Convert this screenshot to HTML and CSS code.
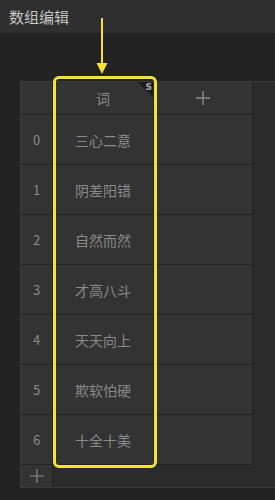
FILE: index.html
```html
<!DOCTYPE html>
<html lang="zh">
<head>
    <meta charset="UTF-8">
    <title>数组编辑</title>
    <link rel="stylesheet" href="styles.css">
</head>
<body>

    <div class="titlebar">数组编辑</div>

    <div class="stage">
        <div class="panel">
            <div class="grid">
                <div class="cell idx head"></div>
                <div class="cell word head">词<span class="badge">S</span></div>
                <div class="cell add head">
                    <svg width="16" height="16" viewBox="0 0 16 16"><path d="M8 1v14M1 8h14" stroke="#8a8a8a" stroke-width="1.4"/></svg>
                </div>

                <div class="cell idx">0</div><div class="cell word">三心二意</div><div class="cell empty"></div>
                <div class="cell idx">1</div><div class="cell word">阴差阳错</div><div class="cell empty"></div>
                <div class="cell idx">2</div><div class="cell word">自然而然</div><div class="cell empty"></div>
                <div class="cell idx">3</div><div class="cell word">才高八斗</div><div class="cell empty"></div>
                <div class="cell idx">4</div><div class="cell word">天天向上</div><div class="cell empty"></div>
                <div class="cell idx">5</div><div class="cell word">欺软怕硬</div><div class="cell empty"></div>
                <div class="cell idx">6</div><div class="cell word">十全十美</div><div class="cell empty"></div>

                <div class="cell idx addrow">
                    <svg width="14" height="14" viewBox="0 0 14 14"><path d="M7 0v14M0 7h14" stroke="#8a8a8a" stroke-width="1.2"/></svg>
                </div>
            </div>
        </div>

        <!-- highlight drawn over the word column -->
        <div class="highlight"></div>
        <svg class="arrow" width="12" height="58" viewBox="0 0 12 58">
            <path d="M6 0v46" stroke="#f2e23a" stroke-width="2"/>
            <path d="M0.5 45h11L6 56z" fill="#f2e23a"/>
        </svg>
    </div>

</body>
</html>
```

FILE: styles.css
```css
body {
    margin: 0;
    background: #222222;
    font-family: "Noto Sans CJK SC", "Noto Sans", sans-serif;
    color: #8a8a8a;
    width: 275px;
    height: 500px;
    overflow: hidden;
}

.titlebar {
    height: 33px;
    line-height: 33px;
    padding-left: 9px;
    background: #2f2f2f;
    color: #c6c6c6;
    font-size: 15px;
}

.stage {
    position: relative;
    padding: 48px 0 0 20px;
}

.panel {
    height: 405px;
    background: #2b2b2b;
    border: 1px solid #3a3a3a;
    border-right: none;
}

.grid {
    display: grid;
    grid-template-columns: 32px 101px 99px;
    grid-template-rows: 33px repeat(7, 50px) 22px;
}

.cell {
    display: flex;
    align-items: center;
    justify-content: center;
    background: #333333;
    border-right: 1px solid #222222;
    border-bottom: 1px solid #222222;
    font-size: 14px;
}

.idx {
    font-size: 13px;
    color: #8c8c8c;
}

.word {
    position: relative;
}

.badge {
    position: absolute;
    top: 0;
    right: 0;
    width: 16px;
    height: 16px;
    background: linear-gradient(to bottom left, #1c1c1c 50%, transparent 50%);
    font-family: "DejaVu Sans", sans-serif;
    font-size: 9px;
    font-weight: bold;
    line-height: 10px;
    text-align: right;
    padding-right: 1px;
    box-sizing: border-box;
    color: #a8a8a8;
}

.addrow {
    border-bottom: none;
}

.highlight {
    position: absolute;
    left: 53px;
    top: 43px;
    width: 98px;
    height: 386px;
    border: 3px solid #f2e23a;
    border-radius: 6px;
}

.arrow {
    position: absolute;
    left: 96px;
    top: -15px;
}
```
